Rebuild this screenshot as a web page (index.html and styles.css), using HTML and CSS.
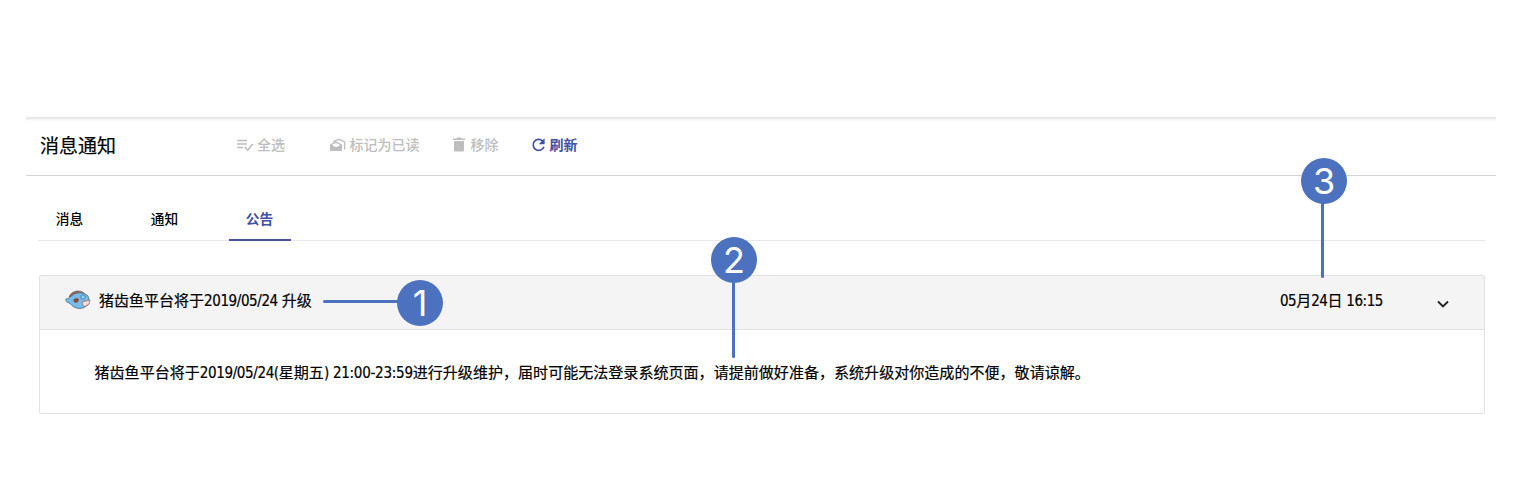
FILE: index.html
```html
<!DOCTYPE html>
<html lang="zh-CN">
<head>
<meta charset="utf-8">
<title>消息通知</title>
<link rel="stylesheet" href="styles.css">
</head>
<body>
<main class="page">
  <header class="header">
    <h1 class="title">消息通知</h1>
    <div class="toolbar">
      <button class="action select" disabled>
        <svg class="icon" width="18" height="18" viewBox="0 0 18 18"><path d="M1 5.500h10M1 9h10M1 12.500h6M8.700 12l3 3 5-6" fill="none" stroke="currentColor" stroke-width="1.6"/></svg>
        <span>全选</span>
      </button>
      <button class="action mark" disabled>
        <svg class="icon" width="18" height="18" viewBox="0 0 18 18"><path d="M1 9.500 7 6.300 13 9.500V15q0 1-1 1H2q-1 0-1-1z" fill="currentColor"/><path d="M2.600 10 7 7.900l4.400 2.100L7 12.300z" fill="#fff"/><path d="M4 6.700 10 4.300l5.600 2.700v7.500" fill="none" stroke="currentColor" stroke-width="1.300"/></svg>
        <span>标记为已读</span>
      </button>
      <button class="action remove" disabled>
        <svg class="icon" width="18" height="18" viewBox="0 0 18 18"><path d="M3 3.500h3.500l.8-1h3.400l.8 1H15v1.600H3zM4 6h10v9.500q0 1-1 1H5q-1 0-1-1z" fill="currentColor"/></svg>
        <span>移除</span>
      </button>
      <button class="action refresh">
        <svg class="icon" width="18" height="18" viewBox="0 0 18 18"><path d="M13.600 6A5.500 5.500 0 1 0 14.900 11.700" fill="none" stroke="currentColor" stroke-width="1.700"/><path d="M15.600 3.300v6H9.700z" fill="currentColor"/></svg>
        <span>刷新</span>
      </button>
    </div>
  </header>
  <nav class="tabs">
    <a class="tab">消息</a>
    <a class="tab">通知</a>
    <a class="tab active">公告</a>
  </nav>
  <section class="panel">
    <div class="panel-head">
      <svg class="fish" width="26" height="20" viewBox="0 0 26 20">
        <path d="M4 7C6 1 14-1 19 3l-3 2z" fill="#a45b4c" stroke="#555e6c" stroke-width=".6"/>
        <path d="M.5 9.500 5 7.500C9 2 18 1 23 6q2 4 .5 8C19 20 10 20 5 13.500L2 12z" fill="#78bcea" stroke="#51677f" stroke-width=".8"/>
        <path d="m8 10 3-2 3 1-1 3-3 1z" fill="#82483f"/>
        <circle cx="18" cy="7" r="2.200" fill="#8ed0f2" stroke="#3f668a" stroke-width=".7"/>
        <path d="m17 12 4-1 4-1-1 4-4 2.500-2-1z" fill="#f3dfd8" stroke="#a66c65" stroke-width=".8"/>
      </svg>
      <span class="subject">猪齿鱼平台将于<span class="num date">2019/05/24 </span>升级</span>
      <time class="time"><span class="num">05</span>月<span class="num">24</span>日<span class="num"> 16:15</span></time>
      <svg class="chevron" width="14" height="10" viewBox="0 0 14 10"><path d="m2 2.500 5 5 5-5" fill="none" stroke="#222" stroke-width="1.900"/></svg>
    </div>
    <p class="panel-body">猪齿鱼平台将于<span class="num date">2019/05/24(</span>星期五<span class="num clock">) 21:00-23:59</span>进行升级维护，届时可能无法登录系统页面，请提前做好准备，系统升级对你造成的不便，敬请谅解。</p>
  </section>
</main>
<div class="line line-one"></div><div class="badge badge-one">1</div>
<div class="line line-two"></div><div class="badge badge-two">2</div>
<div class="line line-three"></div><div class="badge badge-three">3</div>
</body>
</html>
```

FILE: styles.css
```css
* { box-sizing: border-box; }
body {
  margin: 0;
  height: 490px;
  position: relative;
  overflow: hidden;
  background: #fff;
  color: #000;
  font-family: "Noto Sans CJK SC", sans-serif;
}
.page { padding: 117px 31px 0 26px; }
.header {
  height: 59px;
  display: flex;
  align-items: center;
  padding: 0 0 2px 14px;
  border-bottom: 1px solid #d3d3d3;
  background: linear-gradient(#e0e0e0, #f0f0f0 2px, #fff 4px);
}
.title { width: 196px; margin: 0; font-size: 19px; font-weight: 400; line-height: 28px; -webkit-text-stroke: .2px; }
.toolbar { display: flex; }
.action {
  display: flex;
  align-items: center;
  gap: 3px;
  margin: -2px 0 0;
  padding: 0;
  border: 0;
  background: none;
  color: #bdbdbd;
  font: 500 14px/20px "Noto Sans CJK SC", sans-serif;
}
.icon { flex: none; }
.mark { margin-left: 43.500px; }
.remove { margin-left: 30px; }
.refresh { margin-left: 30px; color: #3f51a5; font-weight: 700; }
.tabs {
  display: flex;
  gap: 33px;
  height: 44px;
  margin: 21px 11px 0 12px;
  padding-left: 1px;
  box-shadow: inset 0 -1px #e8e8e8;
}
.tab {
  width: 62px;
  height: 44px;
  padding-top: 11px;
  text-align: center;
  font-size: 13.700px;
  font-weight: 500;
  line-height: 20px;
  text-indent: -1px;
}
.active { color: #3f51a5; font-weight: 700; border-bottom: 2px solid #46509b; }
.panel { margin: 34px 11px 0 13px; height: 139px; border: 1px solid #e1e1e1; border-radius: 2px; }
.panel-head {
  display: flex;
  align-items: center;
  height: 54px;
  padding: 0 34px 5px 25px;
  background: #f4f4f4;
  border-bottom: 1px solid #e1e1e1;
}
.subject { margin-left: 8px; font-size: 15px; line-height: 22px; white-space: nowrap; -webkit-text-stroke: .2px; }
.time { margin-left: auto; font-size: 15px; line-height: 22px; white-space: pre; -webkit-text-stroke: .2px; }
.chevron { margin: 7px 0 0 53px; }
.num { font-family: "DejaVu Sans Condensed", "DejaVu Sans", sans-serif; font-stretch: condensed; letter-spacing: -0.450px; white-space: pre; -webkit-text-stroke: .2px; }
.date { letter-spacing: -0.400px; }
.clock { letter-spacing: -0.280px; }
.panel-body { margin: 0; padding: 31px 0 0 54.500px; font-size: 15.050px; line-height: 22px; white-space: nowrap; -webkit-text-stroke: .2px; }
.line { position: absolute; background: #4c72bf; border-radius: 2px; }
.line-one { left: 323px; top: 300px; width: 80px; height: 3px; }
.line-two { left: 731.500px; top: 275px; width: 3px; height: 83px; }
.line-three { left: 1321px; top: 195px; width: 3px; height: 83px; }
.badge {
  position: absolute;
  width: 46px;
  height: 46px;
  border-radius: 50%;
  background: #4c72bf;
  color: #fff;
  text-align: center;
  font: 36px/46px Inter, sans-serif;
}
.badge-one { left: 397px; top: 280px; }
.badge-two { left: 711px; top: 237px; }
.badge-three { left: 1301px; top: 157.500px; }
```
